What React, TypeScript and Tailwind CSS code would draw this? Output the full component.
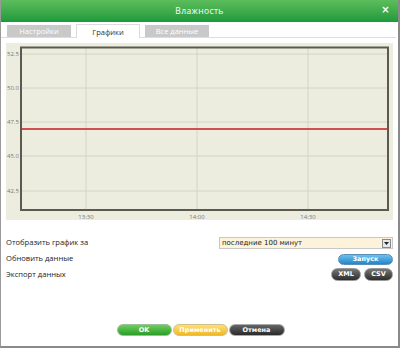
import React from "react";

const yTicks = [
  { y: 11, label: "52.5" },
  { y: 45, label: "50.0" },
  { y: 79, label: "47.5" },
  { y: 113, label: "45.0" },
  { y: 148, label: "42.5" },
];
const xTicks = [
  { x: 80, label: "13:30" },
  { x: 191, label: "14:00" },
  { x: 302, label: "14:30" },
];

function Chart() {
  return (
    <svg width="387" height="177" viewBox="0 0 387 177" className="block">
      <rect x="0" y="0" width="387" height="177" fill="#ededdf" />
      {yTicks.map((t) => (
        <g key={t.label}>
          <line x1="15" x2="382" y1={t.y} y2={t.y} stroke="#d4d4c0" strokeWidth="1" />
          <text x="1" y={t.y + 2} fontSize="6" fill="#777" fontFamily="'Open Sans', sans-serif">
            {t.label}
          </text>
        </g>
      ))}
      {xTicks.map((t) => (
        <g key={t.label}>
          <line x1={t.x} x2={t.x} y1="4" y2="167" stroke="#d4d4c0" strokeWidth="1" />
          <text x={t.x} y="175.5" fontSize="6" fill="#777" textAnchor="middle" fontFamily="'Open Sans', sans-serif">
            {t.label}
          </text>
        </g>
      ))}
      <line x1="15" x2="382" y1="86" y2="86" stroke="#d05050" strokeWidth="2" />
      <rect x="15" y="4.5" width="367" height="162.5" fill="none" stroke="#5a5a50" strokeWidth="2" />
    </svg>
  );
}

export default function App() {
  const sans = { fontFamily: "'Open Sans', 'Noto Sans', sans-serif" };
  const verd = { fontFamily: "'DejaVu Sans', Verdana, sans-serif" };
  return (
    <div className="w-[400px] h-[348px] bg-white flex flex-col border-l border-l-[#9a9a9a] border-r-2 border-r-[#8a8a8a] border-b-2 border-b-[#8a8a8a] overflow-hidden" style={sans}>
      <div className="h-[22px] shrink-0 relative flex items-center justify-center bg-gradient-to-b from-[#5cbd5c] to-[#1a9a3c] text-white text-[8.5px] tracking-[0.4px]">
        <span>Влажность</span>
        <span className="absolute right-[8px] top-[5px] text-[10px] font-bold leading-none" style={verd}>×</span>
      </div>
      <div className="flex items-end pl-[6px] pt-[2px] gap-[5px] h-[16px] border-b border-[#dddddd] mr-[2px] shrink-0">
        <div className="w-[64px] h-[12px] bg-[#c9c9c9] text-white text-[7.5px] leading-[12px] text-center">Настройки</div>
        <div className="w-[64px] h-[14px] bg-white border border-b-0 border-[#dcdcdc] text-[#333] text-[7.5px] leading-[14px] text-center -mb-px">Графики</div>
        <div className="w-[64px] h-[12px] bg-[#c9c9c9] text-white text-[7.5px] leading-[12px] text-center">Все данные</div>
      </div>
      <div className="ml-[5px] mt-[5px] shrink-0">
        <Chart />
      </div>
      <div className="mt-[16px] ml-[5px] mr-[5px] flex flex-col text-[7.6px] text-[#222]">
        <div className="flex items-center justify-between h-[14px]">
          <span>Отобразить график за</span>
          <div className="w-[174px] h-[12px] bg-[#fdf2da] border border-[#c8c8c8] flex items-center justify-between" style={verd}>
            <span className="text-[7px] pl-[2px] text-[#222]">последние 100 минут</span>
            <span className="w-[9px] h-[9px] mr-[1px] bg-[#e8e8e8] border border-[#888] flex items-center justify-center">
              <svg width="5" height="3" viewBox="0 0 5 3"><path d="M0 0 L5 0 L2.5 3 Z" fill="#222" /></svg>
            </span>
          </div>
        </div>
        <div className="flex items-center justify-between h-[16px] mt-[1px]">
          <span>Обновить данные</span>
          <span className="w-[55px] h-[11px] rounded-full bg-gradient-to-b from-[#6cc0ee] to-[#1f86c8] border border-[#5a8fb8] text-white text-[6.5px] font-bold leading-[9px] text-center" style={verd}>Запуск</span>
        </div>
        <div className="flex items-center justify-between h-[15px]">
          <span>Экспорт данных</span>
          <div className="flex gap-[3px]">
            <span className="w-[30px] h-[13px] rounded-full bg-gradient-to-b from-[#777] to-[#2e2e2e] border border-[#999] text-white text-[6.5px] font-bold leading-[11px] text-center" style={verd}>XML</span>
            <span className="w-[29px] h-[13px] rounded-full bg-gradient-to-b from-[#777] to-[#2e2e2e] border border-[#999] text-white text-[6.5px] font-bold leading-[11px] text-center" style={verd}>CSV</span>
          </div>
        </div>
      </div>
      <div className="flex-1" />
      <div className="flex justify-center gap-[1px] mb-[10px] pl-[2px]" style={verd}>
        <span className="w-[55px] h-[12px] rounded-full bg-gradient-to-b from-[#6ccf5a] to-[#2a9d2a] border border-[#9bbf9b] text-white text-[6.5px] font-bold leading-[10px] text-center">OK</span>
        <span className="w-[55px] h-[12px] rounded-full bg-gradient-to-b from-[#ffe070] to-[#f0b820] border border-[#cfc090] text-white text-[6.5px] font-bold leading-[10px] text-center">Применить</span>
        <span className="w-[56px] h-[12px] rounded-full bg-gradient-to-b from-[#666] to-[#2a2a2a] border border-[#aaa] text-white text-[6.5px] font-bold leading-[10px] text-center">Отмена</span>
      </div>
    </div>
  );
}
